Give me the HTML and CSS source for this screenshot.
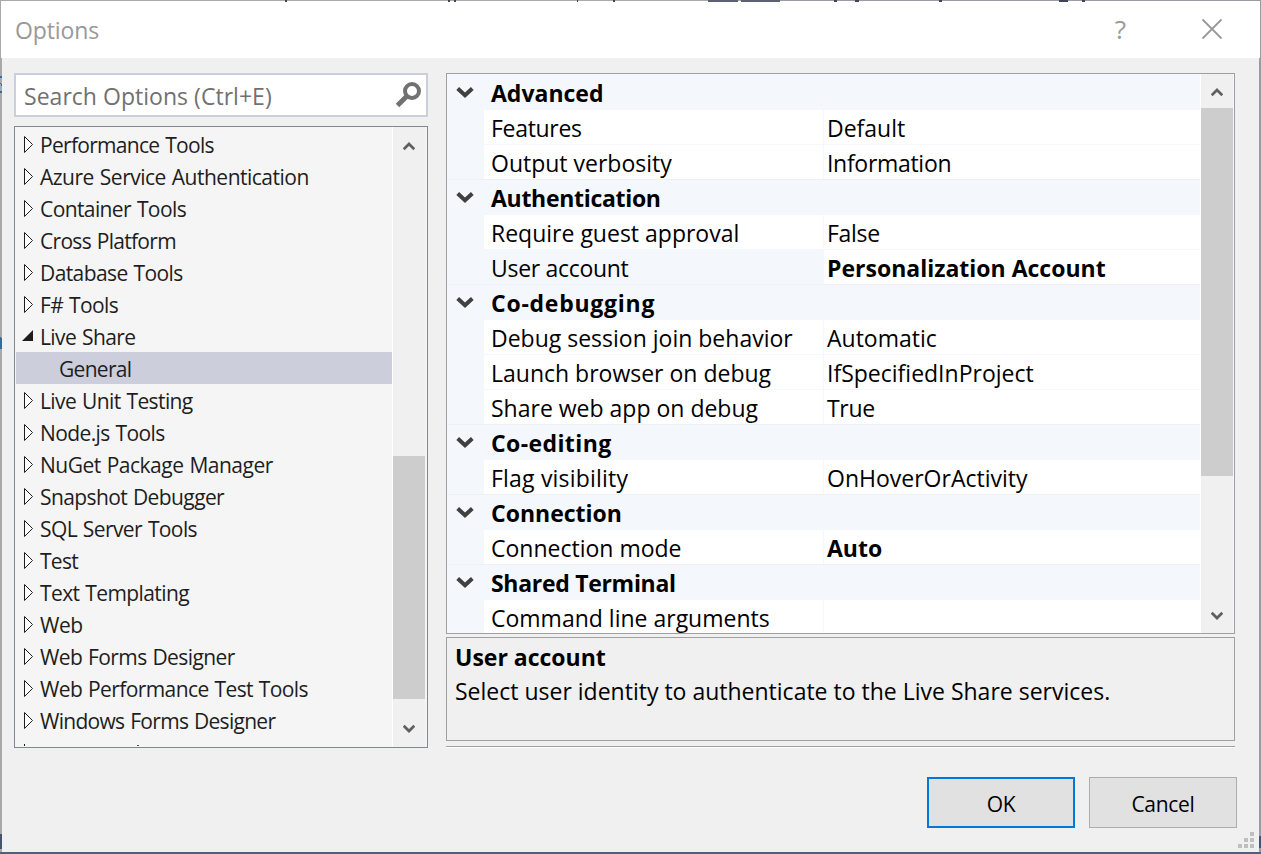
FILE: index.html
```html
<!DOCTYPE html>
<html lang="en">
<head>
<meta charset="utf-8">
<title>Options</title>
<link rel="stylesheet" href="styles.css">
</head>
<body>
<svg width="0" height="0" class="defs">
  <symbol id="closed" viewBox="0 0 12 20"><path d="M1.5 1.5v16L9.5 9.5z" fill="#fff" stroke="#1e1e1e" stroke-width="1"/></symbol>
  <symbol id="open" viewBox="0 0 12 12"><path d="M11 0v11H0z" fill="#1e1e1e"/></symbol>
  <symbol id="down" viewBox="0 0 18 12"><path d="M1.700 2.500l7.300 6.700 7.300-6.700" fill="none" stroke="#404040" stroke-width="4"/></symbol>
  <symbol id="sup" viewBox="0 0 12 10"><path d="M.7 8.3L6 3l5.300 5.300" fill="none" stroke="#606060" stroke-width="2.700"/></symbol>
  <symbol id="sdown" viewBox="0 0 12 10"><path d="M.7 1.700L6 7l5.300-5.300" fill="none" stroke="#606060" stroke-width="2.700"/></symbol>
</svg>
<main class="window">
  <header class="titlebar">
    <h1 class="title">Options</h1>
    <span class="help">?</span>
    <svg class="close" width="22" height="22" viewBox="0 0 22 22"><path d="M1.500 1.500l19 19M20.500 1.500l-19 19" stroke="#999" stroke-width="1.800"/></svg>
  </header>
  <div class="content">
    <section class="left">
      <div class="search"><span class="hint">Search Options (Ctrl+E)</span>
        <svg width="28" height="28" viewBox="0 0 28 28" fill="none" stroke="#717171"><circle cx="17" cy="10" r="7" stroke-width="4"/><path d="M12 15L2.500 24.500" stroke-width="5"/></svg>
      </div>
      <div class="treebox">
        <ul class="tree">
          <li><svg class="tri"><use href="#closed"/></svg><span class="tight">Performance Tools</span></li>
          <li><svg class="tri"><use href="#closed"/></svg><span class="loose">Azure Service Authentication</span></li>
          <li><svg class="tri"><use href="#closed"/></svg><span>Container Tools</span></li>
          <li><svg class="tri"><use href="#closed"/></svg><span class="tight">Cross Platform</span></li>
          <li><svg class="tri"><use href="#closed"/></svg><span>Database Tools</span></li>
          <li><svg class="tri"><use href="#closed"/></svg><span>F# Tools</span></li>
          <li><svg class="tri expanded"><use href="#open"/></svg><span>Live Share</span></li>
          <li class="child selected"><span class="tight">General</span></li>
          <li><svg class="tri"><use href="#closed"/></svg><span>Live Unit Testing</span></li>
          <li><svg class="tri"><use href="#closed"/></svg><span>Node.js Tools</span></li>
          <li><svg class="tri"><use href="#closed"/></svg><span class="loose">NuGet Package Manager</span></li>
          <li><svg class="tri"><use href="#closed"/></svg><span>Snapshot Debugger</span></li>
          <li><svg class="tri"><use href="#closed"/></svg><span>SQL Server Tools</span></li>
          <li><svg class="tri"><use href="#closed"/></svg><span class="tight">Test</span></li>
          <li><svg class="tri"><use href="#closed"/></svg><span>Text Templating</span></li>
          <li><svg class="tri"><use href="#closed"/></svg><span class="loose">Web</span></li>
          <li><svg class="tri"><use href="#closed"/></svg><span>Web Forms Designer</span></li>
          <li><svg class="tri"><use href="#closed"/></svg><span>Web Performance Test Tools</span></li>
          <li><svg class="tri"><use href="#closed"/></svg><span class="tight">Windows Forms Designer</span></li>
          <li class="partial"><i class="tip"></i><i class="dot"></i></li>
        </ul>
        <div class="scroll tree-scroll"><svg class="arrow"><use href="#sup"/></svg><div class="thumb"></div><svg class="arrow"><use href="#sdown"/></svg></div>
      </div>
    </section>
    <section class="right">
      <div class="gridbox">
        <div class="grid">
          <div class="cat"><svg class="chev"><use href="#down"/></svg><b>Advanced</b></div>
          <div class="row"><span class="snug">Features</span><span>Default</span></div>
          <div class="row last"><span>Output verbosity</span><span class="snug">Information</span></div>
          <div class="cat"><svg class="chev"><use href="#down"/></svg><b class="snug">Authentication</b></div>
          <div class="row"><span>Require guest approval</span><span class="snug">False</span></div>
          <div class="row active last"><span class="snug">User account</span><b>Personalization Account</b></div>
          <div class="cat"><svg class="chev"><use href="#down"/></svg><b class="wide">Co-debugging</b></div>
          <div class="row"><span>Debug session join behavior</span><span>Automatic</span></div>
          <div class="row"><span>Launch browser on debug</span><span>IfSpecifiedInProject</span></div>
          <div class="row last"><span>Share web app on debug</span><span class="snug">True</span></div>
          <div class="cat"><svg class="chev"><use href="#down"/></svg><b class="mid">Co-editing</b></div>
          <div class="row last"><span class="airy">Flag visibility</span><span>OnHoverOrActivity</span></div>
          <div class="cat"><svg class="chev"><use href="#down"/></svg><b>Connection</b></div>
          <div class="row last"><span>Connection mode</span><b>Auto</b></div>
          <div class="cat"><svg class="chev"><use href="#down"/></svg><b class="snug">Shared Terminal</b></div>
          <div class="row"><span>Command line arguments</span><span></span></div>
        </div>
        <div class="scroll grid-scroll"><svg class="arrow"><use href="#sup"/></svg><div class="thumb"></div><svg class="arrow"><use href="#sdown"/></svg></div>
      </div>
      <div class="desc"><b>User account</b><p>Select user identity to authenticate to the Live Share services.</p></div>
      <div class="divider"></div>
    </section>
  </div>
  <footer class="buttons"><button class="btn ok">OK</button><button class="btn">Cancel</button></footer>
</main>
<svg class="grip" width="16" height="16" viewBox="0 0 16 16" fill="#bfbfbf"><path d="M12 0h4v4h-4zM6 6h4v4H6zM12 6h4v4h-4zM0 12h4v4H0zM6 12h4v4H6zM12 12h4v4h-4z"/></svg>
<svg class="edges" width="1261" height="854" viewBox="0 0 1261 854" fill="none" shape-rendering="crispEdges">
  <path d="M285 0h2v2h-2zM448 0h2v2h-2zM454 0h2v2h-2zM577 0h1v2h-1zM613 0h2v2h-2zM744 0h2v2h-2zM762 0h3v2h-3zM834 0h3v2h-3zM855 0h4v2h-4zM939 0h3v2h-3zM1059 0h9v2h-9zM1082 0h3v2h-3z" fill="#414459"/>
  <path d="M708 0h30v2h-30zM741 0h39v2h-39z" fill="#5c6070"/>
  <path d="M0 76h2v2H0zM0 83h1v1H0zM1 84h1v2H1zM0 91h2v2H0zM0 337h1v2H0zM0 338h2v11H0z" fill="#2e6e9e"/>
  <path d="M0 834h2v15H0zM1259 836h2v12h-2z" fill="#46536d"/>
</svg>
</body>
</html>
```

FILE: styles.css
```css
* { box-sizing: border-box; }
html, body { margin: 0; height: 100%; overflow: hidden; }
body {
  padding: 1px 2px 2px;
  background: linear-gradient(#4e6080, #4e6080) bottom / 100% 2px no-repeat,
    linear-gradient(90deg, #a9a9ab 60%, #9b9ba3 62%);
  font-family: "Open Sans", "Noto Sans", sans-serif;
  color: #000;
}
.defs { position: absolute; }
.window { height: 851px; background: #f0f0f0; display: flex; flex-direction: column; }
.titlebar { height: 57px; margin: 0 -1px; padding: 0 37px 2px 14px; background: #fff; display: flex; align-items: center; color: #999; flex: none; }
.title { flex: 1; margin: 2px 0 0; font-size: 23px; font-weight: 400; letter-spacing: -.1px; }
.help { font-size: 25px; margin-right: 75px; transform: scaleX(1.050); }
.close { display: block; }
.content { display: flex; gap: 18px; padding: 15px 24px 0 12px; }
.left { width: 414px; }
.search { height: 44px; border: 2px solid #cccedb; background: #fff; padding: 0 3px 0 8px; display: flex; align-items: center; justify-content: space-between; color: #717171; font-size: 23px; letter-spacing: .03px; }
.hint { padding-top: 1px; white-space: nowrap; }
.treebox { margin-top: 9px; height: 622px; border: 1px solid #828790; background: #f5f5f5; display: flex; padding-right: 2px; }
.tree { list-style: none; margin: 0; padding: 1px 0 0 1px; flex: 1; overflow: hidden; font-size: 21px; letter-spacing: -.6px; word-spacing: 1px; color: #1e1e1e; }
.tree li { height: 32px; display: flex; align-items: center; padding-left: 7px; white-space: nowrap; }
.tree span { padding-top: 2px; line-height: 28px; }
.tree .tight { letter-spacing: -.7px; }
.tree .loose { letter-spacing: -.5px; }
.tri { width: 12px; height: 20px; margin: 2px 5px 0 0; flex: none; }
.tri.expanded { height: 12px; width: 12px; margin: 0 6px 1px -1px; }
.tree li.child { padding-left: 43px; }
.tree li.selected { background: #cccedb; }
.tree li.partial { align-items: flex-start; }
.tip { width: 1px; height: 2px; margin: 8px 0 0 1px; background: #1e1e1e; }
.dot { width: 2px; height: 1px; margin: 9px 0 0 112px; background: #555; }
.scroll { width: 33px; flex: none; border-left: 1px solid #fff; background: #f0f0f0; display: flex; flex-direction: column; align-items: center; }
.arrow { width: 12px; height: 10px; flex: none; }
.thumb { width: 32px; background: #cdcdcd; }
.tree-scroll .arrow:first-child { margin-top: 14px; }
.tree-scroll .thumb { height: 243px; margin: 305px 0 25px; }
.right { width: 789px; }
.gridbox { height: 561px; border: 1px solid #a0a0a0; display: flex; background: #f4f7fc; overflow: hidden; padding-right: 1px; }
.grid { flex: 1; padding-top: 1px; font-size: 23px; }
.cat, .row { height: 35px; display: flex; white-space: nowrap; line-height: 36px; }
.cat { align-items: center; }
.cat b { padding-top: 0; }
.chev { width: 18px; height: 12px; margin: 0 17px 1px 9px; }
.row { padding-left: 37px; border-bottom: 1px solid #f4f7fc; }
.row.last { border-bottom: 0; box-shadow: inset 0 -1px #eff0f2; }
.row > * { background: #fff; padding-left: 3px; flex: 1; }
.row > :first-child { flex: 0 0 340px; border-right: 1px solid #f4f7fc; padding-left: 7px; }
.row.last > * { height: 34px; }
.row.active > :first-child { background: #f4f7fc; }
.grid .snug { letter-spacing: -.3px; }
.grid .airy { letter-spacing: .2px; }
.grid .mid { letter-spacing: .4px; }
.grid .wide { letter-spacing: .75px; }
.grid-scroll .arrow:first-child { margin-top: 13px; }
.grid-scroll .thumb { height: 368px; margin: 11px 0 135px; }
.desc { margin-top: 3px; height: 104px; border: 1px solid #a0a0a0; padding: 2px 8px; font-size: 23px; line-height: 34px; white-space: nowrap; }
.desc p { margin: 0; }
.desc b { display: block; }
.divider { margin-top: 5px; height: 2px; background: #a0a0a0; border-bottom: 1px solid #fff; }
.buttons { display: flex; justify-content: flex-end; gap: 14px; padding: 29px 22px 0 0; }
.btn { width: 148px; height: 51px; padding: 2px 0 0; background: #e1e1e1; border: 1px solid #adadad; border-radius: 0; font: 21px "Open Sans", "Noto Sans", sans-serif; color: #000; letter-spacing: -.3px; }
.btn.ok { border: 2px solid #0078d7; }
.grip { position: absolute; left: 1238px; top: 832px; }
.edges { position: absolute; left: 0; top: 0; pointer-events: none; }
```
